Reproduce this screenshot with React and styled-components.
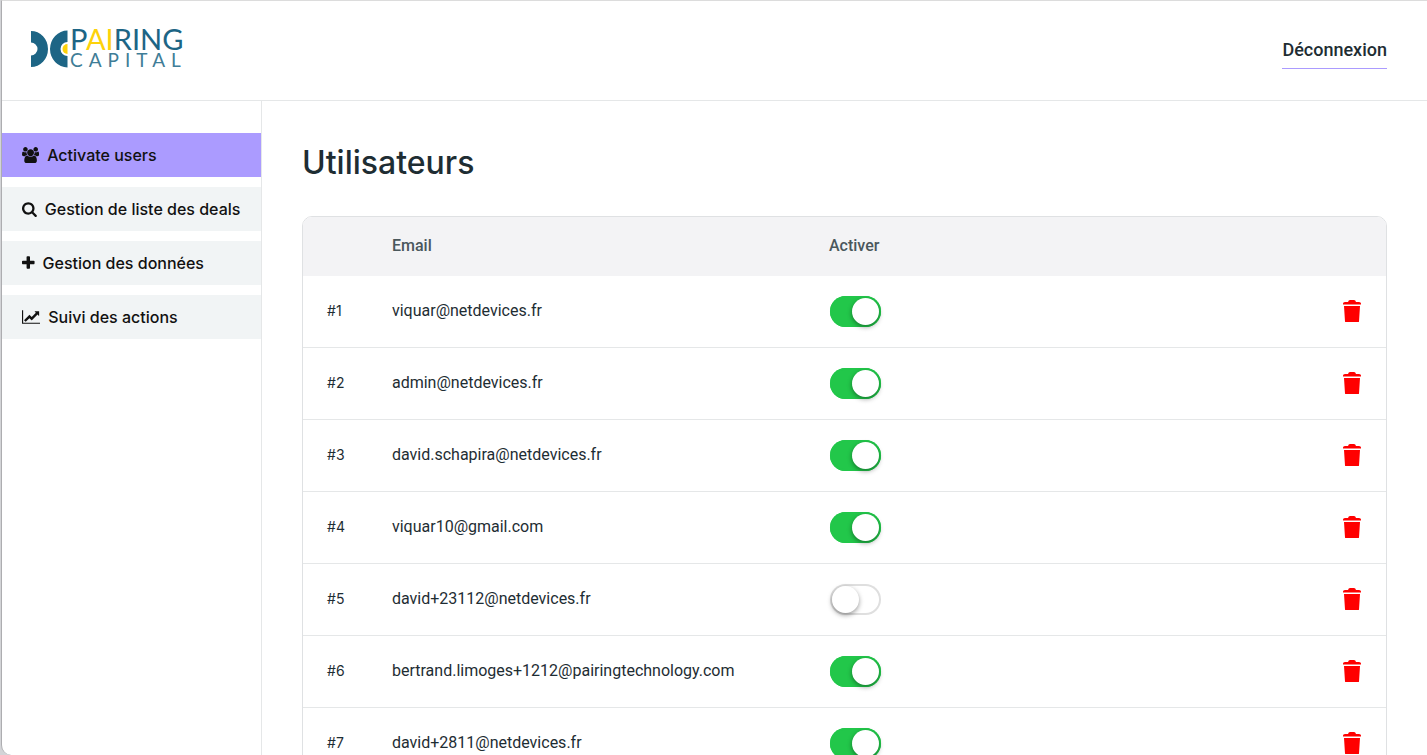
import React, { useState } from 'react';
import styled, { createGlobalStyle } from 'styled-components';

const GlobalStyle = createGlobalStyle`
  * {
    box-sizing: border-box;
  }

  body {
    margin: 0;
    background: #d3d4d7;
    color: #1e2d33;
    font-family: Roboto, sans-serif;
    font-size: 16px;
  }
`

const Window = styled.div`
  display: flex;
  flex-direction: column;
  height: 100vh;
  margin-left: 1px;
  overflow: hidden;
  background: #fff;
  border-top: 1px solid #dcdcdc;
  border-left: 1px solid #adadb0;
  border-bottom-left-radius: 10px;
`

const Header = styled.header`
  display: flex;
  flex-shrink: 0;
  align-items: center;
  justify-content: space-between;
  height: 100px;
  padding: 0 40px 0 28px;
  border-bottom: 1px solid #e5e7e8;
`

const LogoSvg = styled.svg`
  display: block;
  width: 160px;
  height: 59px;
  font-family: Lato, sans-serif;
`

const LogoutLink = styled.a`
  margin-top: 7px;
  padding-bottom: 8px;
  border-bottom: 1px solid #ab9bff;
  color: #1e2d33;
  font-size: 18px;
  font-weight: 500;
  line-height: 21px;
  text-decoration: none;
`

const Body = styled.div`
  display: flex;
  flex: 1;
  min-height: 0;
`

const Sidebar = styled.nav`
  display: flex;
  flex-shrink: 0;
  flex-direction: column;
  gap: 10px;
  width: 260px;
  padding-top: 32px;
  border-right: 1px solid #e5e7e8;
`

const SidebarLink = styled.a`
  display: flex;
  align-items: center;
  gap: 8px;
  height: 44px;
  padding: 0 20px;
  background: ${props => (props.$active ? '#ab9bff' : '#f1f4f5')};
  color: #111;
  font-family: Inter, sans-serif;
  font-size: 16px;
  font-weight: 500;
  white-space: nowrap;
  text-decoration: none;

  svg {
    display: block;
    height: 16px;
    fill: currentColor;
  }
`

const Content = styled.main`
  flex: 1;
  padding: 40px;
`

const Title = styled.h1`
  margin: 0 0 32px;
  font-family: Inter, sans-serif;
  font-size: 32px;
  font-weight: 500;
  line-height: 43px;
`

const TableFrame = styled.div`
  overflow: hidden;
  border: 1px solid #dfe1e3;
  border-radius: 10px;
`

const Table = styled.table`
  width: 100%;
  border-spacing: 0;
  table-layout: fixed;
`

const HeadCell = styled.th`
  width: ${props => props.$width};
  height: 59px;
  padding: 0 24px 2px;
  background: #f3f3f5;
  color: #4a575c;
  font-weight: 500;
  text-align: left;
`

const Cell = styled.td`
  height: 72px;
  padding: 0 24px ${props => (props.$raised ? '2px' : '0')};
  border-bottom: 1px solid #e5e7e8;
  font-size: ${props => (props.$small ? '14px' : '16px')};
  font-family: ${props => (props.$small ? 'Inter' : 'Roboto')}, sans-serif;
`

const Switch = styled.input`
  display: block;
  appearance: none;
  width: 51px;
  height: 31px;
  margin: 0 1px;
  padding: 2px;
  border-radius: 16px;
  background: ${props => (props.checked ? '#22c74a' : '#fff')};
  box-shadow: inset 0 0 0 2px ${props => (props.checked ? '#22c74a' : '#dfdfdf')};
  cursor: pointer;

  &::before {
    content: '';
    display: block;
    width: 27px;
    height: 27px;
    margin-left: ${props => (props.checked ? '20px' : '0')};
    border-radius: 50%;
    background: #fff;
    box-shadow: 0 2px 5px rgba(0, 0, 0, 0.4);
  }
`

const DeleteButton = styled.button`
  display: block;
  margin-left: auto;
  padding: 0;
  border: 0;
  background: none;
  color: #f00;
  cursor: pointer;

  svg {
    display: block;
    fill: currentColor;
  }
`

const Logo = () => (
  <LogoSvg viewBox="0 0 160 59" role="img" aria-label="Pairing Capital">
    <path fill="#1d6585" d="M1 10a17 18 0 0 1 0 36V34.500a6.500 6.500 0 0 0 0-13z" />
    <path fill="#1d6585" d="M37.500 9.500a17.500 18.500 0 0 0 0 37V35a7 7 0 0 1 0-14z" />
    <path fill="#fdd20a" d="M37.500 23a5 5 0 0 0 0 10z" />
    <text x="40" y="29" fontSize="29" fill="#1d6585">
      P<tspan fill="#fdd20a">AI</tspan>RING
    </text>
    <text x="40" y="46" fontSize="19" letterSpacing="6" fill="#3f7d97">
      CAPITAL
    </text>
  </LogoSvg>
);

const UsersIcon = () => (
  <svg viewBox="0 0 1920 1792" aria-hidden="true">
    <path d="M593 896q-162 5-265 128h-134q-82 0-138-40.5t-56-118.5q0-353 124-353 6 0 43.5 21t97.5 42.5 119 21.5q67 0 133-23-5 37-5 66 0 139 81 256zm1071 637q0 120-73 189.5t-194 69.5h-874q-121 0-194-69.5t-73-189.5q0-53 3.5-103.5t14-109 26.5-108.5 43-97.5 62-81 85.5-53.5 111.5-20q10 0 43 21.5t73 48 107 48 135 21.5 135-21.5 107-48 73-48 43-21.5q61 0 111.5 20t85.5 53.5 62 81 43 97.5 26.5 108.5 14 109 3.5 103.5zm-1024-1277q0 106-75 181t-181 75-181-75-75-181 75-181 181-75 181 75 75 181zm704 384q0 159-112.5 271.5t-271.5 112.5-271.5-112.5-112.5-271.5 112.5-271.5 271.5-112.5 271.5 112.5 112.5 271.5zm576 225q0 78-56 118.5t-138 40.5h-134q-103-123-265-128 81-117 81-256 0-29-5-66 66 23 133 23 59 0 119-21.5t97.5-42.5 43.5-21q124 0 124 353zm-128-609q0 106-75 181t-181 75-181-75-75-181 75-181 181-75 181 75 75 181z" />
  </svg>
);

const SearchIcon = () => (
  <svg viewBox="64 0 1664 1792" aria-hidden="true">
    <path d="M1216 832q0-185-131.5-316.5t-316.5-131.5-316.5 131.5-131.5 316.5 131.5 316.5 316.5 131.5 316.5-131.5 131.5-316.5zm512 832q0 52-38 90t-90 38q-54 0-90-38l-343-342q-179 124-399 124-143 0-273.5-55.5t-225-150-150-225-55.5-273.5 55.5-273.5 150-225 225-150 273.5-55.5 273.5 55.5 225 150 150 225 55.5 273.5q0 220-124 399l343 343q37 37 37 90z" />
  </svg>
);

const PlusIcon = () => (
  <svg viewBox="192 0 1408 1792" aria-hidden="true">
    <path d="M1600 736v192q0 40-28 68t-68 28h-416v416q0 40-28 68t-68 28h-192q-40 0-68-28t-28-68v-416h-416q-40 0-68-28t-28-68v-192q0-40 28-68t68-28h416v-416q0-40 28-68t68-28h192q40 0 68 28t28 68v416h416q40 0 68 28t28 68z" />
  </svg>
);

const ChartIcon = () => (
  <svg viewBox="0 0 2048 1792" aria-hidden="true">
    <path d="M2048 1536v128h-2048v-1536h128v1408h1920zm-128-1248v435q0 21-19.5 29.5t-35.5-7.5l-121-121-633 633q-10 10-23 10t-23-10l-233-233-416 416-192-192 585-585q10-10 23-10t23 10l233 233 464-464-121-121q-16-16-7.5-35.5t29.5-19.5h435q14 0 23 9t9 23z" />
  </svg>
);

const TrashIcon = () => (
  <svg width="20" height="24" viewBox="0 0 20 24" aria-hidden="true">
    <path d="M1 5.500V4.500q0-1.500 2-1.500h3q.5-2 2-2h4q1.500 0 2 2h3q2 0 2 1.500v1z" />
    <path d="M2 7h16l-1 15.500q0 .5-1 .5H4q-1 0-1-.5z" />
  </svg>
);

const links = [
  { label: 'Activate users', Icon: UsersIcon, active: true },
  { label: 'Gestion de liste des deals', Icon: SearchIcon },
  { label: 'Gestion des données', Icon: PlusIcon },
  { label: 'Suivi des actions', Icon: ChartIcon },
];

const initialUsers = [
  { id: 1, email: 'viquar@netdevices.fr', enabled: true },
  { id: 2, email: 'admin@netdevices.fr', enabled: true },
  { id: 3, email: 'david.schapira@netdevices.fr', enabled: true },
  { id: 4, email: 'viquar10@gmail.com', enabled: true },
  { id: 5, email: 'david+23112@netdevices.fr', enabled: false },
  { id: 6, email: 'bertrand.limoges+1212@pairingtechnology.com', enabled: true },
  { id: 7, email: 'david+2811@netdevices.fr', enabled: true },
];

const UserRow = ({ user, onToggle, onDelete }) => (
  <tr>
    <Cell $raised $small>#{user.id}</Cell>
    <Cell $raised>{user.email}</Cell>
    <Cell>
      <Switch
        type="checkbox"
        role="switch"
        aria-label={`Activer ${user.email}`}
        checked={user.enabled}
        onChange={() => onToggle(user.id)}
      />
    </Cell>
    <Cell $raised>
      <DeleteButton type="button" aria-label={`Supprimer ${user.email}`} onClick={() => onDelete(user.id)}>
        <TrashIcon />
      </DeleteButton>
    </Cell>
  </tr>
);

const App = () => {
  const [users, setUsers] = useState(initialUsers);

  const toggleUser = id => {
    setUsers(users.map(user => (user.id === id ? { ...user, enabled: !user.enabled } : user)));
  };

  const deleteUser = id => {
    setUsers(users.filter(user => user.id !== id));
  };

  return (
    <>
      <GlobalStyle />
      <Window>
        <Header>
          <Logo />
          <LogoutLink href="#logout">Déconnexion</LogoutLink>
        </Header>
        <Body>
          <Sidebar>
            {links.map(({ label, Icon, active }) => (
              <SidebarLink key={label} href="#" $active={active}>
                <Icon />
                {label}
              </SidebarLink>
            ))}
          </Sidebar>
          <Content>
            <Title>Utilisateurs</Title>
            <TableFrame>
              <Table>
                <thead>
                  <tr>
                    <HeadCell $width="6%" />
                    <HeadCell>Email</HeadCell>
                    <HeadCell>Activer</HeadCell>
                    <HeadCell $width="144px" />
                  </tr>
                </thead>
                <tbody>
                  {users.map(user => (
                    <UserRow key={user.id} user={user} onToggle={toggleUser} onDelete={deleteUser} />
                  ))}
                </tbody>
              </Table>
            </TableFrame>
          </Content>
        </Body>
      </Window>
    </>
  );
};

export default App;
